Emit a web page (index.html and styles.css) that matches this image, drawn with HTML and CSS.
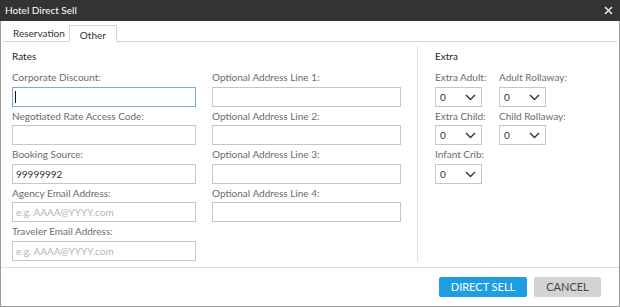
FILE: index.html
```html
<!DOCTYPE html>
<html lang="en">
<head>
    <meta charset="UTF-8">
    <title>Hotel Direct Sell</title>
    <link rel="stylesheet" href="styles.css">
</head>
<body>
    <div class="dialog">
        <div class="titlebar">
            <span class="title">Hotel Direct Sell</span>
            <svg class="close" width="9" height="9" viewBox="0 0 9 9">
                <path d="M1 1L8 8M8 1L1 8" stroke="#e6e6e6" stroke-width="1.6"/>
            </svg>
        </div>

        <div class="tabs">
            <div class="tab">Reservation</div>
            <div class="tab active">Other</div>
        </div>

        <div class="content">
            <div class="rates">
                <div class="section-title">Rates</div>
                <div class="rate-grid">
                    <div class="col">
                        <div class="form-group">
                            <label>Corporate Discount:</label>
                            <div class="caret-wrap">
                                <input type="text" class="focused">
                                <span class="caret"></span>
                            </div>
                        </div>
                        <div class="form-group">
                            <label>Negotiated Rate Access Code:</label>
                            <input type="text">
                        </div>
                        <div class="form-group">
                            <label>Booking Source:</label>
                            <input type="text" value="99999992">
                        </div>
                        <div class="form-group">
                            <label>Agency Email Address:</label>
                            <input type="text" placeholder="e.g. AAAA@YYYY.com">
                        </div>
                        <div class="form-group">
                            <label>Traveler Email Address:</label>
                            <input type="text" placeholder="e.g. AAAA@YYYY.com">
                        </div>
                    </div>
                    <div class="col col-address">
                        <div class="form-group">
                            <label>Optional Address Line 1:</label>
                            <input type="text">
                        </div>
                        <div class="form-group">
                            <label>Optional Address Line 2:</label>
                            <input type="text">
                        </div>
                        <div class="form-group">
                            <label>Optional Address Line 3:</label>
                            <input type="text">
                        </div>
                        <div class="form-group">
                            <label>Optional Address Line 4:</label>
                            <input type="text">
                        </div>
                    </div>
                </div>
            </div>

            <div class="extra">
                <div class="section-title">Extra</div>
                <div class="extra-grid">
                    <div class="form-group">
                        <label>Extra Adult:</label>
                        <div class="select-wrap">
                            <select><option>0</option></select>
                            <svg class="chevron" width="11" height="7" viewBox="0 0 11 7"><path d="M1 1L5.5 5.5L10 1" fill="none" stroke="#333" stroke-width="1.4"/></svg>
                        </div>
                    </div>
                    <div class="form-group">
                        <label>Adult Rollaway:</label>
                        <div class="select-wrap">
                            <select><option>0</option></select>
                            <svg class="chevron" width="11" height="7" viewBox="0 0 11 7"><path d="M1 1L5.5 5.5L10 1" fill="none" stroke="#333" stroke-width="1.4"/></svg>
                        </div>
                    </div>
                    <div class="form-group">
                        <label>Extra Child:</label>
                        <div class="select-wrap">
                            <select><option>0</option></select>
                            <svg class="chevron" width="11" height="7" viewBox="0 0 11 7"><path d="M1 1L5.5 5.5L10 1" fill="none" stroke="#333" stroke-width="1.4"/></svg>
                        </div>
                    </div>
                    <div class="form-group">
                        <label>Child Rollaway:</label>
                        <div class="select-wrap">
                            <select><option>0</option></select>
                            <svg class="chevron" width="11" height="7" viewBox="0 0 11 7"><path d="M1 1L5.5 5.5L10 1" fill="none" stroke="#333" stroke-width="1.4"/></svg>
                        </div>
                    </div>
                    <div class="form-group">
                        <label>Infant Crib:</label>
                        <div class="select-wrap">
                            <select><option>0</option></select>
                            <svg class="chevron" width="11" height="7" viewBox="0 0 11 7"><path d="M1 1L5.5 5.5L10 1" fill="none" stroke="#333" stroke-width="1.4"/></svg>
                        </div>
                    </div>
                </div>
            </div>
        </div>

        <div class="footer">
            <button class="btn btn-primary">DIRECT SELL</button>
            <button class="btn btn-cancel">CANCEL</button>
        </div>
    </div>
</body>
</html>
```

FILE: styles.css
```css
* {
    margin: 0;
    padding: 0;
    box-sizing: border-box;
    font-family: 'Lato', 'Open Sans', sans-serif;
}

body {
    background-color: #ffffff;
}

.dialog {
    width: 620px;
    height: 307px;
    border: 1px solid #9a9a9a;
    border-top: none;
    display: flex;
    flex-direction: column;
}

.titlebar {
    height: 21px;
    margin: 0 -1px;
    background-color: #333333;
    color: #ffffff;
    display: flex;
    align-items: center;
    justify-content: space-between;
    padding: 0 7px 0 5px;
    font-size: 10px;
}

.tabs {
    height: 22px;
    margin: 0 2px;
    padding-left: 2px;
    border-bottom: 1px solid #d4d4d4;
    display: flex;
    align-items: flex-end;
}

.tab {
    height: 17px;
    line-height: 16px;
    font-size: 10px;
    color: #333333;
    padding: 0 4px 0 8px;
    margin-bottom: -1px;
}

.tab.active {
    height: 17px;
    background-color: #ffffff;
    border: 1px solid #d4d4d4;
    border-bottom: 1px solid #ffffff;
    padding: 1px 10px 0 10px;
}

.content {
    flex: 1;
    display: flex;
    border-bottom: 1px solid #dcdcdc;
    padding-top: 4px;
    padding-bottom: 5px;
}

.rates {
    width: 417px;
    padding-left: 11px;
    border-right: 1px solid #e0e0e0;
}

.section-title {
    font-size: 10px;
    color: #222222;
    line-height: 16px;
    margin-top: 2px;
    margin-bottom: 5px;
}

.rate-grid {
    display: flex;
    gap: 16px;
}

.col {
    width: 184px;
}

.col-address {
    width: 189px;
}

.form-group {
    margin-bottom: 1px;
}

label {
    display: block;
    font-size: 10px;
    line-height: 16px;
    color: #6b6b6b;
    margin-bottom: 1.5px;
    white-space: nowrap;
}

input {
    display: block;
    width: 100%;
    height: 20px;
    border: 1px solid #c6c6c6;
    padding: 0 3px;
    font-size: 10px;
    color: #333333;
    outline: none;
}

input::placeholder {
    color: #b4b4b4;
}

input.focused {
    border-color: #7fa8dc;
}

.caret-wrap {
    position: relative;
}

.caret {
    position: absolute;
    left: 3px;
    top: 4px;
    width: 1px;
    height: 12px;
    background-color: #111111;
}

.extra {
    padding-left: 17px;
}

.extra-grid {
    display: grid;
    grid-template-columns: 64px 60px;
}

.select-wrap {
    position: relative;
    width: 47px;
}

select {
    display: block;
    width: 47px;
    height: 20px;
    border: 1px solid #c6c6c6;
    background-color: #ffffff;
    appearance: none;
    -webkit-appearance: none;
    padding: 0 4px;
    font-size: 10px;
    color: #333333;
    outline: none;
}

.chevron {
    position: absolute;
    right: 6px;
    top: 7px;
}

.footer {
    height: 39px;
    display: flex;
    justify-content: flex-end;
    align-items: center;
    gap: 7px;
    padding-right: 18px;
}

.btn {
    height: 20px;
    border: none;
    border-radius: 2px;
    font-size: 11px;
    cursor: pointer;
}

.btn-primary {
    width: 88px;
    background-color: #1e9ee2;
    color: #ffffff;
}

.btn-cancel {
    width: 67px;
    background-color: #d3d3d3;
    color: #444444;
}
```
